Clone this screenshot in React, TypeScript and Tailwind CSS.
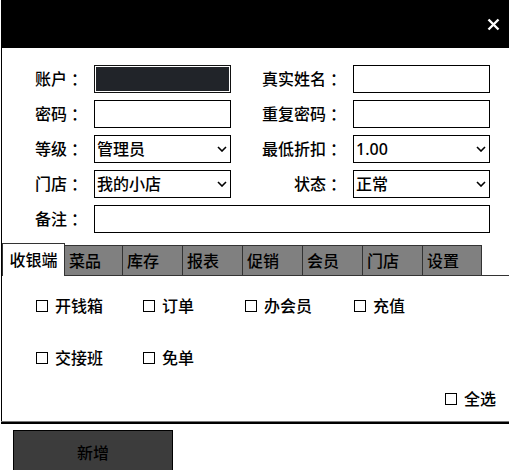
import React from "react";

const Chevron = () => (
  <svg width="10" height="6" viewBox="0 0 10 6" className="shrink-0">
    <path d="M1 1 L5 5 L9 1" fill="none" stroke="#000" strokeWidth="1.6" />
  </svg>
);

const Label = ({ children }: { children: React.ReactNode }) => (
  <div className="flex h-[28px] items-center justify-end pr-[11px] text-[16px] font-medium leading-none text-black whitespace-nowrap">
    {children}
    <span style={{ fontFamily: '"Noto Sans CJK JP", sans-serif' }}>：</span>
  </div>
);

const Input = () => <div className="h-[28px] border border-black bg-white" />;

const Select = ({ value }: { value: string }) => (
  <div className="flex h-[28px] items-center justify-between border border-black bg-white pl-[2px] pr-[3px] text-[16px] font-medium leading-none text-black">
    <span>{value}</span>
    <Chevron />
  </div>
);

const Check = ({ label }: { label: string }) => (
  <div className="flex h-[20px] items-center">
    <div className="h-[12px] w-[12px] border border-black bg-white" />
    <span className="ml-[7px] text-[16px] font-medium leading-none text-black">{label}</span>
  </div>
);

const tabs = [
  { t: "菜品", w: "w-[58px]" },
  { t: "库存", w: "w-[60px]" },
  { t: "报表", w: "w-[60px]" },
  { t: "促销", w: "w-[60px]" },
  { t: "会员", w: "w-[60px]" },
  { t: "门店", w: "w-[60px]" },
  { t: "设置", w: "w-[59px]" },
];

export default function App() {
  return (
    <div
      className="relative h-[470px] w-[509px] overflow-hidden bg-white"
      style={{ fontFamily: '"Noto Sans", "Noto Sans CJK SC", sans-serif' }}
    >
      <div className="ml-[1px] flex flex-col">
        {/* header */}
        <div className="flex h-[48px] items-center justify-end bg-black pr-[9px]">
          <svg width="13" height="13" viewBox="0 0 13 13">
            <path d="M1.5 1.5 L11.5 11.5 M11.5 1.5 L1.5 11.5" stroke="#fff" strokeWidth="2.4" />
          </svg>
        </div>

        {/* body */}
        <div className="flex flex-col border-l border-black">
          <div className="grid grid-cols-[59px_137px_122px_137px] gap-y-[7px] pl-[33px] pt-[17px]">
            <Label>账户</Label>
            <div className="h-[28px] border border-[#111] bg-white p-[1px]">
              <div className="h-full w-full bg-[#212429]" />
            </div>
            <Label>真实姓名</Label>
            <Input />

            <Label>密码</Label>
            <Input />
            <Label>重复密码</Label>
            <Input />

            <Label>等级</Label>
            <Select value="管理员" />
            <Label>最低折扣</Label>
            <Select value="1.00" />

            <Label>门店</Label>
            <Select value="我的小店" />
            <Label>状态</Label>
            <Select value="正常" />

            <Label>备注</Label>
            <div className="col-span-3">
              <Input />
            </div>
          </div>

          {/* tabs */}
          <div className="mt-[10px] flex h-[33px] items-end">
            <div className="flex h-[33px] w-[63px] items-center justify-center border-x border-t border-[#333] bg-white text-[16px] font-medium leading-none text-black">
              收银端
            </div>
            {tabs.map((x) => (
              <div
                key={x.t}
                className={`flex h-[31px] ${x.w} items-center border-y border-r border-[#333] bg-[#808080] pl-[4px] text-[16px] font-medium leading-none text-black`}
              >
                {x.t}
              </div>
            ))}
            <div className="h-[31px] flex-1 border-b border-[#333]" />
          </div>

          {/* panel */}
          <div className="flex h-[145px] flex-col pt-[20px]">
            <div className="grid grid-cols-[107px_102px_109px_auto] pl-[34px]">
              <Check label="开钱箱" />
              <Check label="订单" />
              <Check label="办会员" />
              <Check label="充值" />
            </div>
            <div className="mt-[32px] grid grid-cols-[107px_102px_109px_auto] pl-[34px]">
              <Check label="交接班" />
              <Check label="免单" />
            </div>
            <div className="mt-[21px] flex justify-end pr-[13px]">
              <Check label="全选" />
            </div>
          </div>
        </div>
        <div className="h-[1px] bg-[#777]" />
        <div className="h-[2px] bg-black" />

        {/* footer */}
        <div className="pl-[12px] pt-[6px]">
          <div className="flex h-[46px] w-[160px] items-center justify-center border border-black bg-[#3c3c3c] text-[16px] font-medium leading-none text-black">
            新增
          </div>
        </div>
      </div>
    </div>
  );
}
